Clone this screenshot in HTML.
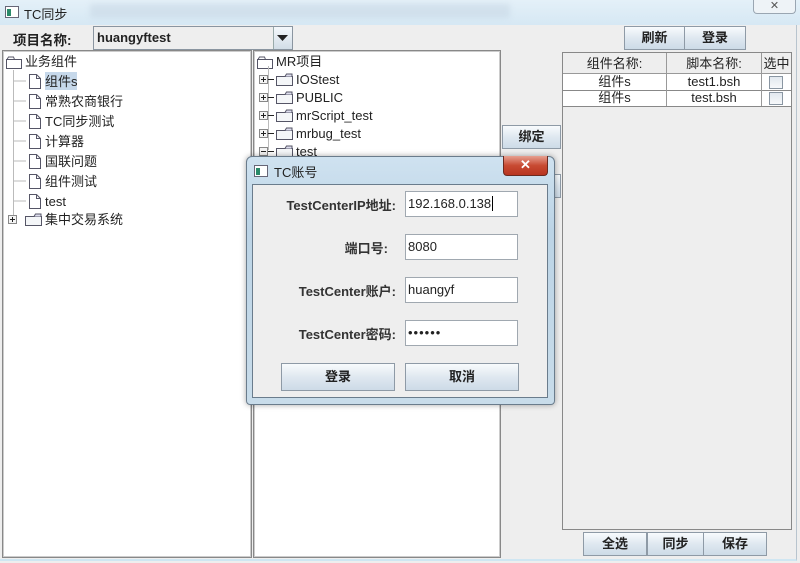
<!DOCTYPE html>
<html><head><meta charset="utf-8"><style>
*{margin:0;padding:0;box-sizing:border-box}
body{width:800px;height:563px;overflow:hidden;background:#eeeeee;font-family:"Liberation Sans","Noto Sans CJK SC",sans-serif;font-size:13px;color:#222;position:relative}
.a{position:absolute}
.tb{left:0;top:0;width:800px;height:25px;background:linear-gradient(#e4f0f8,#d6e8f4)}
.btn{position:absolute;border:1px solid #8e9aa6;background:linear-gradient(#f8fbfd,#dfe8f0 50%,#cddbe7);font-weight:bold;text-align:center;font-size:13px;color:#222}
.panel{position:absolute;background:#fff;border:1px solid #888;box-shadow:inset 0 0 0 1px #ccc}
.row{position:absolute;white-space:nowrap;font-size:13px;line-height:18px;height:18px}
.inp{position:absolute;background:#fff;border:1px solid #a0a8b0;font-size:13px;padding-left:2px;line-height:24px}
.lbl{position:absolute;font-weight:bold;text-align:right;width:200px;font-size:13px;color:#333}
svg{position:absolute}
.c{position:absolute;font-size:13px;text-align:center;line-height:16px}
</style></head><body>
<div class="a tb"></div>
<svg style="left:5px;top:6px" width="14" height="12"><rect x="0.5" y="0.5" width="13" height="11" fill="#fff" stroke="#667"/><rect x="2" y="3" width="4" height="7" fill="#2a8a6a"/></svg>
<div class="a" style="left:24px;top:4px;font-size:13px">TC同步</div>
<div class="a" style="left:90px;top:4px;width:420px;height:14px;background:#c4d4e2;opacity:.5;filter:blur(3px)"></div>
<div class="a" style="left:753px;top:0;width:43px;height:14px;border:1px solid #9aa6b2;border-top:none;border-radius:0 0 4px 4px;background:#eef3f7;text-align:center;font-size:11px;line-height:12px;color:#555">✕</div>
<div class="a" style="left:0;top:25px;width:797px;height:536px;border-right:1px solid #b8c4ce;border-bottom:2px solid #cfe6f2"></div>

<div class="a" style="left:13px;top:29px;font-weight:bold;font-size:13.5px">项目名称:</div>
<div class="a" style="left:93px;top:26px;width:200px;height:24px;border:1px solid #8a95a0;background:#eeeeee"></div>
<div class="a" style="left:97px;top:30px;font-weight:bold;font-size:13px">huangyftest</div>
<div class="a" style="left:273px;top:27px;width:19px;height:22px;background:linear-gradient(#f4f8fb,#d2dde7);border-left:1px solid #9aa"></div>
<svg style="left:277px;top:34px" width="12" height="8"><path d="M0 1h11L5.5 7z" fill="#222"/></svg>

<div class="panel" style="left:2px;top:50px;width:250px;height:508px"></div>
<div class="panel" style="left:253px;top:50px;width:248px;height:508px"></div>

<svg style="left:6px;top:56px" width="16" height="13"><path d="M0.5 3.5h15v9h-15z" fill="#fff" stroke="#556"/><path d="M1 3.5l1.5-2.5h5l1 2.5" fill="none" stroke="#556"/></svg>
<div class="row" style="left:25px;top:53px">业务组件</div>
<svg style="left:13px;top:70px" width="20" height="160"><path d="M0.5 0v151M1 11h12M1 31h12M1 51h12M1 71h12M1 91h12M1 111h12M1 131h12" stroke="#bbb"/></svg>
<div class="a" style="left:45px;top:72px;width:32px;height:18px;background:#c6d8ea"></div>
<div id="lt"></div>
<svg style="left:8px;top:215px" width="10" height="10"><rect x="0.5" y="0.5" width="8" height="8" fill="#f4f4f4" stroke="#888"/><path d="M2 4.5h5M4.5 2v5" stroke="#222"/></svg>
<svg style="left:25px;top:213px" width="17" height="13"><path d="M0.5 3.5h16v9h-16z" fill="#f4f6f8" stroke="#556"/><path d="M9 3.5l1.5-2.5h5.5v2.5" fill="#dde" stroke="#556"/></svg>
<div class="row" style="left:45px;top:211px">集中交易系统</div>

<svg style="left:257px;top:56px" width="16" height="13"><path d="M0.5 3.5h15v9h-15z" fill="#fff" stroke="#556"/><path d="M1 3.5l1.5-2.5h5l1 2.5" fill="none" stroke="#556"/></svg>
<div class="row" style="left:276px;top:53px">MR项目</div>
<div id="mt"></div>

<div class="btn" style="left:502px;top:125px;width:59px;height:24px;line-height:22px">绑定</div>
<div class="btn" style="left:520px;top:174px;width:41px;height:24px"></div>

<div class="btn" style="left:624px;top:26px;width:61px;height:24px;line-height:22px">刷新</div>
<div class="btn" style="left:684px;top:26px;width:62px;height:24px;line-height:22px">登录</div>

<div class="a" style="left:562px;top:52px;width:230px;height:478px;border:1px solid #888;background:#eeeeee"></div>
<div class="a" style="left:563px;top:53px;width:228px;height:21px;background:#eeeeee;border-bottom:1px solid #999"></div>
<div class="a" style="left:563px;top:74px;width:228px;height:32px;background:#fff"></div>
<div class="a" style="left:563px;top:90px;width:228px;height:1px;background:#888"></div>
<div class="a" style="left:563px;top:106px;width:228px;height:1px;background:#888"></div>
<div class="a" style="left:666px;top:53px;width:1px;height:53px;background:#999"></div>
<div class="a" style="left:761px;top:53px;width:1px;height:53px;background:#999"></div>
<div class="c" style="left:563px;top:56px;width:103px">组件名称:</div>
<div class="c" style="left:667px;top:56px;width:94px">脚本名称:</div>
<div class="c" style="left:762px;top:56px;width:29px">选中</div>
<div class="c" style="left:563px;top:74px;width:103px">组件s</div>
<div class="c" style="left:667px;top:74px;width:94px">test1.bsh</div>
<div class="c" style="left:563px;top:90px;width:103px">组件s</div>
<div class="c" style="left:667px;top:90px;width:94px">test.bsh</div>
<div class="a" style="left:769px;top:76px;width:14px;height:13px;border:1px solid #8a96a2;background:linear-gradient(#e2e8ee,#f6f8fa)"></div>
<div class="a" style="left:769px;top:92px;width:14px;height:13px;border:1px solid #8a96a2;background:linear-gradient(#e2e8ee,#f6f8fa)"></div>

<div class="btn" style="left:583px;top:532px;width:64px;height:24px;line-height:22px">全选</div>
<div class="btn" style="left:647px;top:532px;width:57px;height:24px;line-height:22px">同步</div>
<div class="btn" style="left:703px;top:532px;width:64px;height:24px;line-height:22px">保存</div>

<div class="a" style="left:246px;top:156px;width:309px;height:249px;border:1px solid #6a7c8c;border-radius:6px 6px 4px 4px;background:linear-gradient(#cfe2f0,#bcd4e6 30%,#c8dcea);box-shadow:0 0 6px rgba(0,0,0,.35)"></div>
<svg style="left:254px;top:165px" width="14" height="12"><rect x="0.5" y="0.5" width="13" height="11" fill="#fff" stroke="#667"/><rect x="2" y="3" width="4" height="7" fill="#2a8a6a"/></svg>
<div class="a" style="left:274px;top:162px;font-size:13px">TC账号</div>
<div class="a" style="left:503px;top:156px;width:45px;height:20px;border:1px solid #6a2a20;border-top:none;border-radius:0 0 4px 4px;background:linear-gradient(#e6a090,#c84a32 50%,#b83420);color:#fff;font-weight:bold;text-align:center;line-height:18px;font-size:13px">✕</div>
<div class="a" style="left:252px;top:184px;width:296px;height:214px;border:1px solid #6a7c8c;background:#eeeeee"></div>

<div class="lbl" style="left:196px;top:195px">TestCenterIP地址:</div>
<div class="inp" style="left:405px;top:191px;width:113px;height:26px">192.168.0.138<span style="border-left:1px solid #000;margin-left:1px"></span></div>
<div class="lbl" style="left:188px;top:238px">端口号:</div>
<div class="inp" style="left:405px;top:234px;width:113px;height:26px">8080</div>
<div class="lbl" style="left:196px;top:281px">TestCenter账户:</div>
<div class="inp" style="left:405px;top:277px;width:113px;height:26px">huangyf</div>
<div class="lbl" style="left:196px;top:324px">TestCenter密码:</div>
<div class="inp" style="left:405px;top:320px;width:113px;height:26px;letter-spacing:1px">••••••</div>
<div class="btn" style="left:281px;top:363px;width:114px;height:28px;line-height:26px">登录</div>
<div class="btn" style="left:405px;top:363px;width:114px;height:28px;line-height:26px">取消</div>

<script>
var f='<svg width="12" height="15"><path d="M0.5 0.5h7l4 4v10h-11z" fill="#fff" stroke="#556"/><path d="M7.5 0.5v4h4" fill="none" stroke="#556"/></svg>';
var L=["组件s","常熟农商银行","TC同步测试","计算器","国联问题","组件测试","test"],h="";
L.forEach(function(t,i){var y=73+i*20;h+='<div style="position:absolute;left:29px;top:'+(y+1)+'px">'+f.replace('<svg','<svg style="position:static"')+'</div><div class="row" style="left:45px;top:'+y+'px">'+t+'</div>';});
document.getElementById('lt').innerHTML=h;
var M=["IOStest","PUBLIC","mrScript_test","mrbug_test","test"];h='<svg style="left:268px;top:66px" width="8" height="90"><path d="M0.5 0v84" stroke="#bbb"/></svg>';
M.forEach(function(t,i){var y=71+i*18;h+='<svg style="left:259px;top:'+(y+4)+'px" width="16" height="10"><rect x="0.5" y="0.5" width="8" height="8" fill="#f4f4f4" stroke="#888"/><path d="M2 4.5h5'+(i<4?'M4.5 2v5':'')+'M9 4.5h6" stroke="#222"/></svg><svg style="left:276px;top:'+(y+2)+'px" width="17" height="13"><path d="M0.5 3.5h16v9h-16z" fill="#f4f6f8" stroke="#556"/><path d="M9 3.5l1.5-2.5h5.5v2.5" fill="#dde" stroke="#556"/></svg><div class="row" style="left:296px;top:'+y+'px">'+t+'</div>';});
document.getElementById('mt').innerHTML=h;
</script>
</body></html>
